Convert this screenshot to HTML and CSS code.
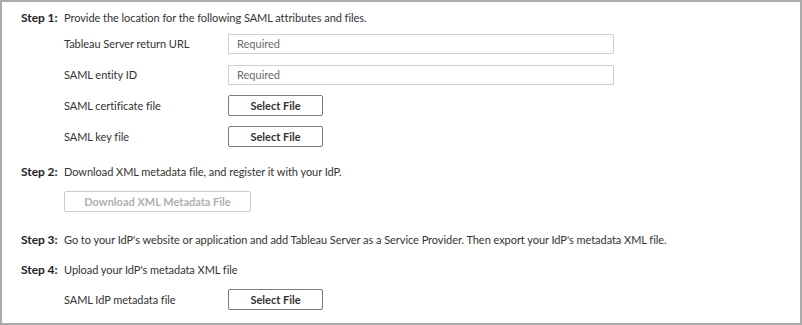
FILE: index.html
```html
<!DOCTYPE html>
<html lang="en">
<head>
    <meta charset="UTF-8">
    <meta name="viewport" content="width=device-width, initial-scale=1.0">
    <title>SAML Configuration</title>
    <link rel="stylesheet" href="styles.css">
</head>
<body>
    <div class="panel">
        <div class="step step-1">
            <div class="step-head">
                <span class="step-num">Step 1:</span>
                <span>Provide the location for the following SAML attributes and files.</span>
            </div>
            <div class="rows">
                <div class="row">
                    <label class="row-label">Tableau Server return URL</label>
                    <input type="text" class="field" placeholder="Required">
                </div>
                <div class="row">
                    <label class="row-label">SAML entity ID</label>
                    <input type="text" class="field" placeholder="Required">
                </div>
                <div class="row">
                    <label class="row-label">SAML certificate file</label>
                    <button class="file-btn">Select File</button>
                </div>
                <div class="row">
                    <label class="row-label">SAML key file</label>
                    <button class="file-btn">Select File</button>
                </div>
            </div>
        </div>

        <div class="step step-2">
            <div class="step-head">
                <span class="step-num">Step 2:</span>
                <span>Download XML metadata file, and register it with your IdP.</span>
            </div>
            <div class="rows">
                <button class="download-btn" disabled>Download XML Metadata File</button>
            </div>
        </div>

        <div class="step step-3">
            <div class="step-head">
                <span class="step-num">Step 3:</span>
                <span>Go to your IdP's website or application and add Tableau Server as a Service Provider. Then export your IdP's metadata XML file.</span>
            </div>
        </div>

        <div class="step step-4">
            <div class="step-head">
                <span class="step-num">Step 4:</span>
                <span>Upload your IdP's metadata XML file</span>
            </div>
            <div class="rows">
                <div class="row">
                    <label class="row-label">SAML IdP metadata file</label>
                    <button class="file-btn">Select File</button>
                </div>
            </div>
        </div>
    </div>
</body>
</html>
```

FILE: styles.css
```css
*{
    box-sizing: border-box;
}
body{
    margin: 0;
    background-color: #fff;
    font-family: "Lato", "Liberation Sans", sans-serif;
    font-size: 11px;
    letter-spacing: -0.05px;
    color: #333;
}
.panel{
    width: 802px;
    height: 325px;
    border: 2px solid #ababab;
    padding: 6px 19px 0 19px;
}
.step-head{
    display: flex;
    line-height: 20px;
}
.step-num{
    width: 43px;
    font-weight: bold;
    font-size: 12px;
    color: #222;
}
.rows{
    display: flex;
    flex-direction: column;
    gap: 10px;
    padding-left: 43px;
    margin-top: 5px;
}
.row{
    display: flex;
    align-items: center;
    height: 21px;
}
.row-label{
    width: 164px;
}
.field{
    width: 386px;
    height: 20px;
    border: 1px solid #cfcfcf;
    border-radius: 1px;
    padding: 0 8px;
    font-family: inherit;
    font-size: 11px;
    color: #333;
    outline: none;
}
.field::placeholder{
    color: #6a6a6a;
}
.file-btn{
    width: 95px;
    height: 21px;
    background-color: #fff;
    border: 1px solid #7a7a7a;
    border-radius: 2px;
    font-family: inherit;
    font-size: 11px;
    font-weight: bold;
    color: #333;
    padding: 0;
    cursor: pointer;
}
.download-btn{
    width: 187px;
    height: 21px;
    background-color: #fff;
    border: 1px solid #cccccc;
    border-radius: 2px;
    font-family: inherit;
    font-size: 11px;
    font-weight: bold;
    color: #b0b0b0;
    padding: 0;
}
.step-2{
    margin-top: 15px;
}
.step-2 .rows{
    margin-top: 9px;
}
.step-3{
    margin-top: 18px;
}
.step-4{
    margin-top: 10px;
}
.step-4 .rows{
    margin-top: 9px;
}
```
